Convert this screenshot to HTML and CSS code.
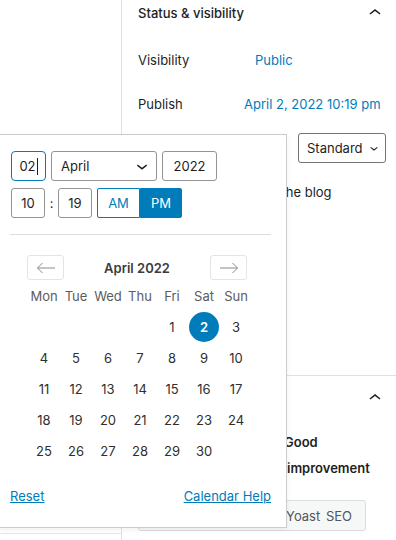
FILE: index.html
```html
<!DOCTYPE html>
<html lang="en">
<head>
<meta charset="utf-8">
<title>Post settings – date picker</title>
<link rel="stylesheet" href="styles.css">
</head>
<body>
<div class="page">
  <div class="canvas">
    <div class="canvas-body"></div>
    <div class="canvas-foot"></div>
  </div>
  <aside class="sidebar">
    <section class="panel status">
      <div class="panel-head">
        <span class="panel-title">Status &amp; visibility</span>
        <svg class="chev" viewBox="0 0 24 24" width="24" height="24"><path d="M6.5 12.4L12 8l5.5 4.4-.9 1.2L12 10l-4.6 3.6-1-1.2z"/></svg>
      </div>
      <div class="row">
        <span class="label">Visibility</span>
        <span class="value vis">Public</span>
      </div>
      <div class="row">
        <span class="label">Publish</span>
        <span class="value">April 2, 2022 10:19 pm</span>
      </div>
      <div class="row">
        <span class="label">Post Format</span>
        <span class="select">Standard<svg viewBox="0 0 24 24" width="16" height="16"><path d="M17.5 11.6L12 16l-5.5-4.4.9-1.2L12 14l4.6-3.6 1 1.2z"/></svg></span>
      </div>
      <div class="row">
        <span class="checkbox"></span>
        <span class="sticky-text">Stick to the top of the blog</span>
      </div>
      <div class="row">
        <span class="checkbox"></span>
        <span>Pending review</span>
      </div>
      <div class="row filler">
        <span class="trash">Move to trash</span>
      </div>
    </section>
    <section class="panel yoast">
      <div class="panel-head tall">
        <span class="panel-title">Yoast SEO</span>
        <svg class="chev" viewBox="0 0 24 24" width="24" height="24"><path d="M6.5 12.4L12 8l5.5 4.4-.9 1.2L12 10l-4.6 3.6-1-1.2z"/></svg>
      </div>
      <div class="score"><span class="score-label">Readability analysis:</span><b>Good</b></div>
      <div class="score"><span class="score-label wide">SEO analysis: Needs</span><b>improvement</b></div>
      <div class="yoast-btn">Improve your post with Yoast SEO</div>
    </section>
  </aside>
</div>

<div class="popover">
  <div class="dt-row">
    <div class="field day focused">02<span class="caret"></span></div>
    <div class="field month">April<svg viewBox="0 0 24 24" width="22" height="22"><path d="M17.5 11.6L12 16l-5.5-4.4.9-1.2L12 14l4.6-3.6 1 1.2z"/></svg></div>
    <div class="field year">2022</div>
  </div>
  <div class="dt-row time">
    <div class="field hour">10</div>
    <span class="colon">:</span>
    <div class="field minute">19</div>
    <div class="ampm">
      <span class="am">AM</span>
      <span class="pm">PM</span>
    </div>
  </div>
  <div class="divider"></div>
  <div class="cal">
    <div class="cal-nav">
      <span class="nav-btn"><svg viewBox="0 0 20 12" width="20" height="12"><path d="M19 6H1.5M6.5 1L1.5 6l5 5"/></svg></span>
      <span class="cal-title">April 2022</span>
      <span class="nav-btn"><svg viewBox="0 0 20 12" width="20" height="12"><path d="M1 6h17.5M13.5 1l5 5-5 5"/></svg></span>
    </div>
    <div class="grid">
      <span class="wd">Mon</span><span class="wd">Tue</span><span class="wd">Wed</span><span class="wd">Thu</span><span class="wd">Fri</span><span class="wd">Sat</span><span class="wd">Sun</span>
      <span></span><span></span><span></span><span></span><span class="d">1</span><span class="d sel">2</span><span class="d">3</span>
      <span class="d">4</span><span class="d">5</span><span class="d">6</span><span class="d">7</span><span class="d">8</span><span class="d">9</span><span class="d">10</span>
      <span class="d">11</span><span class="d">12</span><span class="d">13</span><span class="d">14</span><span class="d">15</span><span class="d">16</span><span class="d">17</span>
      <span class="d">18</span><span class="d">19</span><span class="d">20</span><span class="d">21</span><span class="d">22</span><span class="d">23</span><span class="d">24</span>
      <span class="d">25</span><span class="d">26</span><span class="d">27</span><span class="d">28</span><span class="d">29</span><span class="d">30</span><span></span>
    </div>
  </div>
  <div class="links">
    <a href="#">Reset</a>
    <a href="#">Calendar Help</a>
  </div>
</div>
</body>
</html>
```

FILE: styles.css
```css
* { box-sizing: border-box; }
html, body { margin: 0; padding: 0; background: #fff; }
body {
  font-family: Inter, "Noto Sans", sans-serif;
  font-size: 13px;
  color: #1e1e1e;
  width: 396px;
  height: 540px;
  overflow: hidden;
  position: relative;
}

.page { display: flex; height: 540px; }

.canvas { width: 121px; flex: none; display: flex; flex-direction: column; }
.canvas-body { flex: 1; }
.canvas-foot { height: 7px; border-top: 1px solid #e6e6e6; }

.sidebar { flex: 1; border-left: 1px solid #e0e0e0; }

.panel { padding: 0 17px 0 16px; }
.panel-head {
  height: 26px;
  margin-bottom: 12px;
  display: flex;
  align-items: center;
  justify-content: space-between;
}
.panel-head.tall { height: 44px; margin-bottom: 9px; }
.panel-title { font-weight: 500; }
.chev { margin-right: -6px; fill: #1e1e1e; }

.row { height: 44px; display: flex; align-items: center; white-space: nowrap; }
.label { width: 106px; flex: none; }
.value { color: #007cba; white-space: nowrap; }
.value.vis { padding-left: 11px; }
.select {
  margin-left: 54px;
  height: 30px;
  width: 88px;
  border: 1px solid #757575;
  border-radius: 3px;
  display: flex;
  align-items: center;
  justify-content: space-between;
  padding: 0 3px 0 8px;
  margin-right: -6px;
  flex: none;
}
.select svg { fill: #1e1e1e; }
.checkbox { width: 16px; height: 16px; border: 1px solid #757575; border-radius: 2px; margin-right: 15px; flex: none; }
.row.filler { height: 117px; align-items: flex-start; padding-top: 12px; }
.trash { color: #cc1818; }

.yoast { border-top: 1px solid #e0e0e0; }
.score { height: 26px; display: flex; align-items: center; white-space: nowrap; }
.score-label { width: 146px; flex: none; }
.score-label.wide { width: 149px; }
.score b { font-weight: 600; }
.yoast-btn {
  margin-top: 19px;
  width: 228px;
  height: 31px;
  border: 1px solid #dcdcde;
  border-radius: 3px;
  background: #f6f7f7;
  color: #50575e;
  display: flex;
  align-items: center;
  justify-content: flex-end;
  padding-right: 13px;
  word-spacing: 2px;
  white-space: nowrap;
}

/* Popover */
.popover {
  position: absolute;
  top: 134px;
  left: -1px;
  width: 288px;
  height: 394px;
  background: #fff;
  border: 1px solid #cccccc;
  box-shadow: 0 2px 6px rgba(0, 0, 0, 0.06);
  padding: 16px 15px 0 10px;
}
.dt-row { display: flex; align-items: center; gap: 5px; height: 30px; }
.dt-row.time { margin-top: 7px; gap: 0; }
.field {
  height: 30px;
  border: 1px solid #949494;
  border-radius: 3px;
  display: flex;
  align-items: center;
  justify-content: center;
  font-size: 13px;
  color: #1e1e1e;
}
.day { margin-left: 1px; width: 35px; }
.focused { border: 1.5px solid #007cba; border-radius: 4px; }
.caret { display: inline-block; width: 1px; height: 17px; background: #1e1e1e; margin-left: 1px; }
.month { width: 106px; justify-content: space-between; padding: 0 3px 0 9px; }
.month svg { fill: #1e1e1e; }
.year { width: 55px; }
.hour { margin-left: 1px; width: 34px; }
.colon { width: 13px; text-align: center; }
.minute { width: 34px; }
.ampm { display: flex; height: 30px; margin-left: 5px; }
.ampm span {
  display: flex; align-items: center; justify-content: center;
  border: 1px solid #007cba;
}
.am { width: 43px; color: #007cba; border-radius: 2px 0 0 2px; }
.pm { width: 42px; background: #007cba; color: #fff; border-radius: 0 2px 2px 0; }

.divider { margin-top: 16px; height: 1px; background: #dddddd; }

.cal { padding: 20px 0 0 17px; }
.cal-nav { width: 220px; height: 25px; display: flex; align-items: center; justify-content: space-between; }
.nav-btn {
  width: 37px; height: 25px;
  border: 1px solid #e4e4e4; border-radius: 3px;
  display: flex; align-items: center; justify-content: center;
}
.nav-btn svg { fill: none; stroke: #8a8a8a; stroke-width: 1; }
.cal-title { font-weight: 600; color: #3c3c3c; }
.grid {
  margin-left: 1px;
  display: grid;
  grid-template-columns: repeat(7, 32px);
  grid-auto-rows: 31px;
  align-items: center;
  justify-items: center;
}
.wd { color: #5c5c5c; }
.d { color: #2f2f2f; width: 30px; height: 30px; display: flex; align-items: center; justify-content: center; border-radius: 50%; }
.d.sel { background: #007cba; color: #fff; font-weight: 600; }

.links { margin-top: 22px; display: flex; justify-content: space-between; line-height: 16px; }
.links a { color: #007cba; text-decoration: underline; }
```
